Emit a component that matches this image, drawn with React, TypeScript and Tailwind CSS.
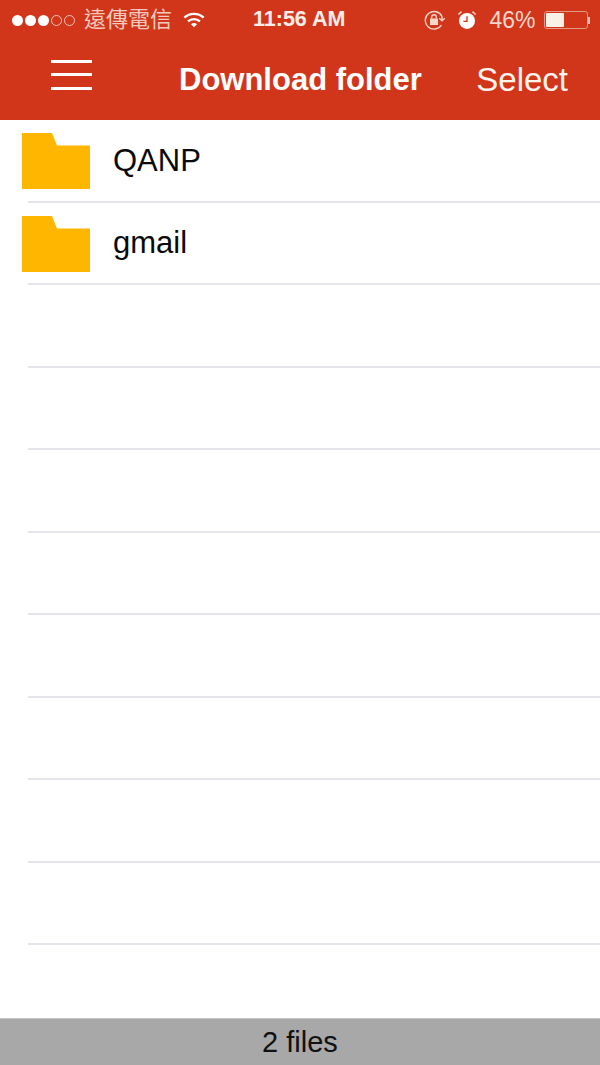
const rows = ['QANP', 'gmail', '', '', '', '', '', '', '', ''];

function Folder() {
    return (
        <svg width="68" height="56" viewBox="0 0 68 56" className="shrink-0">
            <path d="M0 0H30L35 12.5H68V56H0Z" fill="#ffb600" />
        </svg>
    );
}

function Wifi() {
    return (
        <svg width="22" height="18" viewBox="0 0 24 18" fill="none" stroke="#fff" strokeWidth="2.6">
            <path d="M1.5 6.5C7.5 1 16.5 1 22.5 6.5" />
            <path d="M5.5 10.5C9 7.3 15 7.3 18.5 10.5" />
            <path d="M12 17L8.7 13.6C10.6 12 13.4 12 15.3 13.6Z" fill="#fff" stroke="none" />
        </svg>
    );
}

function RotationLock() {
    return (
        <svg width="22" height="20" viewBox="0 0 22 20" fill="none" stroke="#f6d5cb" strokeWidth="1.4">
            <path d="M17.5 15A8.8 8.8 0 1 1 18 6.5V10" />
            <path d="M15.2 8.2L18 10.8L20.8 8.2" strokeWidth="1.3" />
            <rect x="6" y="8.5" width="8" height="6.5" fill="#f6d5cb" stroke="none" />
            <path d="M7.7 8.5V7A2.3 2.3 0 0 1 12.3 7V8.5" />
        </svg>
    );
}

function Alarm() {
    return (
        <svg width="20" height="20" viewBox="0 0 22 22" fill="none">
            <circle cx="11" cy="12" r="8.8" fill="#fff" />
            <path d="M11 7V12.5H7" stroke="#d2361a" strokeWidth="1.5" />
            <path d="M1.5 5L5 1.8M20.5 5L17 1.8" stroke="#f6d5cb" strokeWidth="1.6" />
        </svg>
    );
}

function Battery() {
    return (
        <div className="flex items-center">
            <div className="w-[44px] h-[18px] rounded-[3px] border border-[#e59a86] p-[1px] flex">
                <div className="w-[18px] bg-[#f7f1e8] rounded-[1px]" />
            </div>
            <div className="w-[2px] h-[7px] bg-[#eebdae]" />
        </div>
    );
}

export default function App() {
    return (
        <div className="w-[600px] h-[1065px] flex flex-col bg-white overflow-hidden font-['Liberation_Sans','Noto_Sans_CJK_TC',sans-serif]">
            <header className="h-[120px] shrink-0 bg-[#d2361a] text-white flex flex-col">
                <div className="h-[40px] flex items-center pl-[12px] pr-[10px]">
                    <div className="flex items-center gap-[2px]">
                        <span className="w-[11px] h-[11px] rounded-full bg-white" />
                        <span className="w-[11px] h-[11px] rounded-full bg-white" />
                        <span className="w-[11px] h-[11px] rounded-full bg-white" />
                        <span className="w-[11px] h-[11px] rounded-full border border-[#f0c4b8]" />
                        <span className="w-[11px] h-[11px] rounded-full border border-[#f0c4b8]" />
                    </div>
                    <span className="ml-[9px] text-[22px] leading-none text-[#f3c9bd]">遠傳電信</span>
                    <span className="ml-[11px] flex"><Wifi /></span>
                    <span className="ml-[48px] text-[21.5px] leading-none font-bold text-[#fbeee9]">11:56 AM</span>
                    <span className="ml-[79px] flex"><RotationLock /></span>
                    <span className="ml-[11px] flex"><Alarm /></span>
                    <span className="ml-[12px] text-[23px] leading-none text-[#f6d5cb]">46%</span>
                    <span className="ml-auto"><Battery /></span>
                </div>
                <div className="flex-1 flex items-center pl-[51px] pb-[2px]">
                    <div className="w-[41px] flex flex-col gap-[10.5px] -mt-[9px]">
                        <div className="h-[3px] bg-white" />
                        <div className="h-[3px] bg-white" />
                        <div className="h-[3px] bg-white" />
                    </div>
                    <h1 className="ml-[87px] text-[31px] leading-none font-bold">Download folder</h1>
                    <span className="ml-auto mr-[32px] text-[33px] leading-none text-[#fdf3ef]">Select</span>
                </div>
            </header>

            <ul className="flex-1">
                {rows.map((name, i) => (
                    <li key={i} className="h-[82.5px] flex flex-col">
                        <div className="flex-1 flex items-center pl-[22px] pt-[2px]">
                            {name && <Folder />}
                            {name && <span className="ml-[23px] -mt-[2px] text-[31px] leading-none text-[#0a0a0a]">{name}</span>}
                        </div>
                        <div className="ml-[28px] h-[2px] bg-[#e4e5ea]" />
                    </li>
                ))}
            </ul>

            <footer className="h-[47px] shrink-0 bg-[#a8a8a8] border-t border-[#c4c4c4] flex items-center justify-center text-[29px] leading-none text-[#111]">
                2 files
            </footer>
        </div>
    );
}
